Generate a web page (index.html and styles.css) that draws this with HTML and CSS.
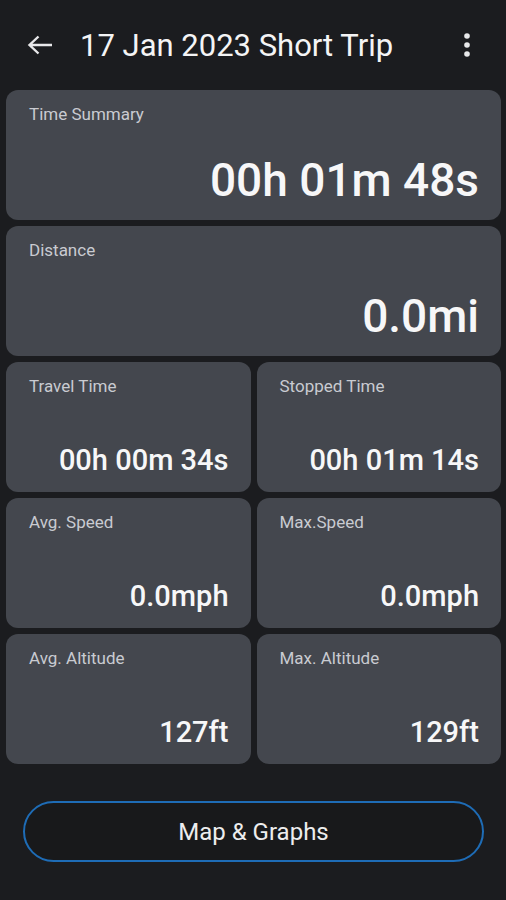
FILE: index.html
```html
<!DOCTYPE html>
<html lang="en">
<head>
  <meta charset="UTF-8" />
  <meta name="viewport" content="width=device-width, initial-scale=1.0"/>
  <title>17 Jan 2023 Short Trip</title>
  <link rel="stylesheet" href="styles.css">
</head>
<body>
  <header class="topbar">
    <button class="icon-btn back" aria-label="Back">
      <svg width="26" height="22" viewBox="0 0 26 22"><path d="M25 11H3M11.5 2.5L2.5 11l9 8.5" fill="none" stroke="#e8e8ea" stroke-width="2.4"/></svg>
    </button>
    <h1 class="title">17 Jan 2023 Short Trip</h1>
    <button class="icon-btn more" aria-label="More">
      <svg width="10" height="26" viewBox="0 0 10 26"><circle cx="5" cy="4" r="2.8" fill="#e8e8ea"/><circle cx="5" cy="13" r="2.8" fill="#e8e8ea"/><circle cx="5" cy="22" r="2.8" fill="#e8e8ea"/></svg>
    </button>
  </header>

  <main class="stats">
    <div class="card wide">
      <span class="label">Time Summary</span>
      <span class="value big">00h 01m 48s</span>
    </div>
    <div class="card wide">
      <span class="label">Distance</span>
      <span class="value big">0.0mi</span>
    </div>
    <div class="card">
      <span class="label">Travel Time</span>
      <span class="value">00h 00m 34s</span>
    </div>
    <div class="card">
      <span class="label">Stopped Time</span>
      <span class="value">00h 01m 14s</span>
    </div>
    <div class="card">
      <span class="label">Avg. Speed</span>
      <span class="value">0.0mph</span>
    </div>
    <div class="card">
      <span class="label">Max.Speed</span>
      <span class="value">0.0mph</span>
    </div>
    <div class="card">
      <span class="label">Avg. Altitude</span>
      <span class="value">127ft</span>
    </div>
    <div class="card">
      <span class="label">Max. Altitude</span>
      <span class="value">129ft</span>
    </div>
  </main>

  <div class="actions">
    <button class="outline-btn">Map &amp; Graphs</button>
  </div>
</body>
</html>
```

FILE: styles.css
```css
body {
  font-family: Roboto, 'Noto Sans', sans-serif;
  margin: 0;
  background: #1b1c1f;
  color: #f4f4f5;
}
.topbar {
  height: 90px;
  display: flex;
  align-items: center;
  padding: 0 34px 0 27px;
  box-sizing: border-box;
}
.icon-btn {
  background: none;
  border: none;
  padding: 0;
  display: flex;
  cursor: pointer;
}
.more {
  margin-left: auto;
}
.title {
  margin: 0 0 0 27px;
  font-size: 31px;
  font-weight: 400;
  color: #f4f4f5;
}
.stats {
  display: grid;
  grid-template-columns: 1fr 1fr;
  gap: 6px;
  padding: 0 5px 0 6px;
}
.card {
  background: #44474e;
  border-radius: 12px;
  height: 130px;
  box-sizing: border-box;
  padding: 14px 22px 17px 23px;
  display: flex;
  flex-direction: column;
}
.card.wide {
  grid-column: span 2;
}
.label {
  font-size: 17px;
  line-height: 21px;
  color: #c9cbd1;
}
.value {
  margin-top: auto;
  text-align: right;
  font-size: 29px;
  line-height: 29px;
  font-weight: 500;
  color: #f7f7f8;
}
.value.big {
  font-size: 46px;
  line-height: 46px;
}
.actions {
  padding: 37px 22px 0 23px;
}
.outline-btn {
  width: 100%;
  height: 61px;
  border: 2px solid #1e6cb6;
  border-radius: 31px;
  background: #18191b;
  color: #ededee;
  font-family: Roboto, 'Noto Sans', sans-serif;
  font-size: 24px;
  font-weight: 400;
  cursor: pointer;
}
```
